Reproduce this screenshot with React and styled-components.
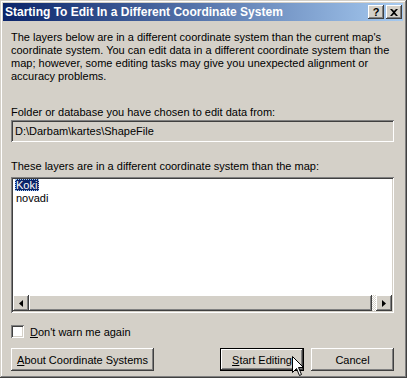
import React from 'react';
import styled, { createGlobalStyle } from 'styled-components';

const Global = createGlobalStyle`
  html, body { margin: 0; padding: 0; background: #d4d0c8; }
  body { font-family: "Liberation Sans", Arial, sans-serif; font-size: 11px; color: #000; }
`;

const raised = `box-shadow: inset -1px -1px #404040, inset 1px 1px #ffffff, inset -2px -2px #808080, inset 2px 2px #d4d0c8;`;
const sunken = `box-shadow: inset 1px 1px #808080, inset -1px -1px #ffffff, inset 2px 2px #404040, inset -2px -2px #d4d0c8;`;

const Window = styled.div`
  position: relative;
  width: 407px;
  height: 378px;
  box-sizing: border-box;
  padding: 3px 4px 4px 3px;
  background: #d4d0c8;
  box-shadow: inset -1px -1px #404040, inset 1px 1px #d4d0c8, inset -2px -2px #808080, inset 2px 2px #ffffff;
  display: flex;
  flex-direction: column;
  overflow: hidden;
`;

const TitleBar = styled.div`
  height: 18px;
  display: flex;
  align-items: center;
  justify-content: space-between;
  padding: 0 1px 0 2px;
  background: linear-gradient(to right, #0a246a, #a6caf0);
`;

const TitleText = styled.div`
  color: #fff;
  font-weight: bold;
  font-size: 12px;
  white-space: nowrap;
`;

const TitleButtons = styled.div`
  display: flex;
  gap: 2px;
`;

const TitleButton = styled.div`
  width: 16px;
  height: 14px;
  box-sizing: border-box;
  background: #d4d0c8;
  ${raised}
  display: flex;
  align-items: center;
  justify-content: center;
  font-weight: bold;
  font-size: 11px;
  line-height: 14px;
`;

const Content = styled.div`
  display: flex;
  flex-direction: column;
  padding: 10px 9px 0 8px;
`;

const Para = styled.p`
  margin: 0;
  line-height: 13px;
  white-space: nowrap;
`;

const Label = styled.div`
  line-height: 13px;
  margin-top: ${p => p.$top}px;
  margin-bottom: ${p => p.$bottom}px;
  white-space: nowrap;
`;

const Field = styled.div`
  height: 22px;
  box-sizing: border-box;
  ${sunken}
  background: #d4d0c8;
  padding-left: 4px;
  display: flex;
  align-items: center;
`;

const ListBox = styled.div`
  height: 136px;
  box-sizing: border-box;
  ${sunken}
  background: #fff;
  padding: 2px;
  display: flex;
  flex-direction: column;
`;

const Items = styled.div`
  flex: 1;
  padding-left: 2px;
  display: flex;
  flex-direction: column;
  align-items: flex-start;
`;

const Item = styled.div`
  line-height: 12px;
  height: 12px;
  padding: 0 2px 0 1px;
  background: ${p => (p.$selected ? '#0a246a' : 'transparent')};
  color: ${p => (p.$selected ? '#fff' : '#000')};
  outline: ${p => (p.$selected ? '1px dotted #a6caf0' : 'none')};
  outline-offset: -1px;
  margin-bottom: 1px;
`;

const HScroll = styled.div`
  height: 16px;
  display: flex;
  background: repeating-conic-gradient(#ffffff 0 25%, #d4d0c8 0 50%) 0 0 / 2px 2px;
`;

const ScrollBtn = styled.div`
  width: 16px;
  height: 16px;
  box-sizing: border-box;
  background: #d4d0c8;
  ${raised}
  display: flex;
  align-items: center;
  justify-content: center;
`;

const Thumb = styled.div`
  width: 343px;
  height: 16px;
  box-sizing: border-box;
  background: #d4d0c8;
  ${raised}
`;

const Track = styled.div`
  flex: 1;
`;

const CheckRow = styled.label`
  display: flex;
  align-items: center;
  gap: 6px;
  margin-top: 12px;
  height: 13px;
`;

const CheckBox = styled.div`
  width: 13px;
  height: 13px;
  box-sizing: border-box;
  background: #fff;
  ${sunken}
`;

const ButtonRow = styled.div`
  display: flex;
  justify-content: space-between;
  margin-top: 10px;
`;

const RightGroup = styled.div`
  display: flex;
  gap: 7px;
`;

const Button = styled.div`
  width: ${p => p.$w}px;
  height: 23px;
  box-sizing: border-box;
  background: #d4d0c8;
  ${p => p.$default
    ? `box-shadow: inset 0 0 0 1px #000, inset -2px -2px #404040, inset 2px 2px #ffffff, inset -3px -3px #808080;`
    : raised}
  display: flex;
  align-items: center;
  justify-content: center;
  white-space: nowrap;
`;

const U = styled.span`
  text-decoration: underline;
`;

const Cursor = styled.svg`
  position: absolute;
  left: 292px;
  top: 356px;
`;

export default function App() {
  return (
    <>
      <Global />
      <Window>
        <TitleBar>
          <TitleText>Starting To Edit In a Different Coordinate System</TitleText>
          <TitleButtons>
            <TitleButton>?</TitleButton>
            <TitleButton>
              <svg width="8" height="7" viewBox="0 0 8 7">
                <path d="M0 0h2l2 2 2-2h2L5 3.5 8 7H6L4 5 2 7H0l3-3.5z" fill="#000" />
              </svg>
            </TitleButton>
          </TitleButtons>
        </TitleBar>
        <Content>
          <Para>
            The layers below are in a different coordinate system than the current map's<br />
            coordinate system. You can edit data in a different coordinate system than the<br />
            map; however, some editing tasks may give you unexpected alignment or<br />
            accuracy problems.
          </Para>
          <Label $top={23} $bottom={1}>Folder or database you have chosen to edit data from:</Label>
          <Field>D:\Darbam\kartes\ShapeFile</Field>
          <Label $top={18} $bottom={4}>These layers are in a different coordinate system than the map:</Label>
          <ListBox>
            <Items>
              <Item $selected>Koki</Item>
              <Item>novadi</Item>
            </Items>
            <HScroll>
              <ScrollBtn>
                <svg width="4" height="7" viewBox="0 0 4 7"><path d="M4 0v7L0 3.5z" fill="#000" /></svg>
              </ScrollBtn>
              <Thumb />
              <Track />
              <ScrollBtn>
                <svg width="4" height="7" viewBox="0 0 4 7"><path d="M0 0v7l4-3.5z" fill="#000" /></svg>
              </ScrollBtn>
            </HScroll>
          </ListBox>
          <CheckRow>
            <CheckBox />
            <span><U>D</U>on't warn me again</span>
          </CheckRow>
          <ButtonRow>
            <Button $w={143}><span><U>A</U>bout Coordinate Systems</span></Button>
            <RightGroup>
              <Button $w={84} $default><span><U>S</U>tart Editing</span></Button>
              <Button $w={83}>Cancel</Button>
            </RightGroup>
          </ButtonRow>
        </Content>
        <Cursor width="13" height="21" viewBox="0 0 13 21">
          <path d="M0.5 0.5 V16.5 L4.5 12.5 L7.5 19.5 L9.5 18.5 L6.5 11.5 H11.5 Z" fill="#fff" stroke="#000" strokeWidth="1" />
        </Cursor>
      </Window>
    </>
  );
}
